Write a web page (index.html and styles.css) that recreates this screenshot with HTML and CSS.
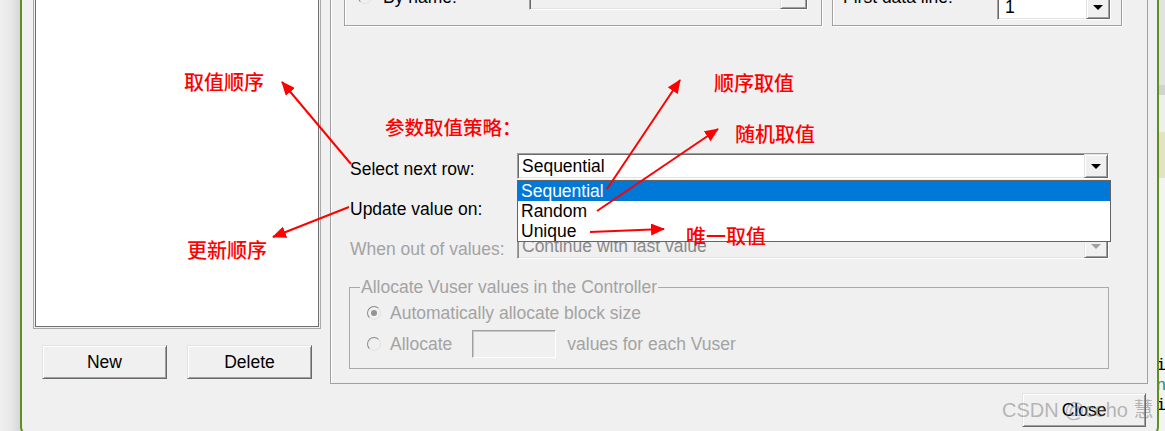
FILE: index.html
```html
<!DOCTYPE html>
<html lang="en">
<head>
<meta charset="utf-8">
<title>Parameter properties</title>
<link rel="stylesheet" href="styles.css">
</head>
<body>
<div class="screen">
  <div class="desk-left"></div>
  <div class="dialog">
    <div class="dialog-body">
      <div class="left-col">
        <div class="list-outer"><div class="list-inner"></div></div>
        <div class="btn-row">
          <button class="btn">New</button>
          <button class="btn">Delete</button>
        </div>
      </div>
      <div class="right-col">
        <div class="panel">
          <div class="top-row">
            <div class="group g-source">
              <div class="src-row">
                <span class="radio"></span>
                <span class="lbl lbl-name">By name:</span>
                <div class="combo c-name"><span class="combo-text"></span><span class="combo-btn wide"></span></div>
              </div>
            </div>
            <div class="group g-first">
              <span class="lbl lbl-first">First data line:</span>
              <div class="combo c-first"><span class="combo-text pad7">1</span><span class="combo-btn"><i class="arrow"></i></span></div>
            </div>
          </div>
          <div class="form">
            <div class="row">
              <span class="row-label">Select next row:</span>
              <div class="combo c-wide">
                <span class="combo-text">Sequential</span>
                <span class="combo-btn"><i class="arrow"></i></span>
                <ul class="popup">
                  <li class="sel">Sequential</li>
                  <li>Random</li>
                  <li>Unique</li>
                </ul>
              </div>
            </div>
            <div class="row">
              <span class="row-label">Update value on:</span>
              <div class="combo c-wide">
                <span class="combo-text"></span>
                <span class="combo-btn"><i class="arrow"></i></span>
              </div>
            </div>
            <div class="row">
              <span class="row-label dis">When out of values:</span>
              <div class="combo c-wide disabled">
                <span class="combo-text">Continue with last value</span>
                <span class="combo-btn"><i class="arrow"></i></span>
              </div>
            </div>
          </div>
          <fieldset class="alloc">
            <legend>Allocate Vuser values in the Controller</legend>
            <div class="a-row a-row1">
              <span class="radio checked"></span>
              <span class="a-text">Automatically allocate block size</span>
            </div>
            <div class="a-row a-row2">
              <span class="radio"></span>
              <span class="a-text">Allocate</span>
              <span class="a-input"></span>
              <span class="a-after">values for each Vuser</span>
            </div>
          </fieldset>
        </div>
        <div class="close-row"><button class="btn btn-close">Close</button></div>
      </div>
    </div>
  </div>
  <div class="desk-right"><span class="dr-i">i</span><span class="dr-n">n</span><span class="dr-i">i</span></div>
</div>

<div class="watermark">CSDN @ceho 慧</div>

<svg class="arrows" width="1165" height="431" viewBox="0 0 1165 431" xmlns="http://www.w3.org/2000/svg">
  <defs>
    <marker id="head" viewBox="0 0 14 12" refX="13" refY="6" markerWidth="14" markerHeight="12" markerUnits="userSpaceOnUse" orient="auto">
      <path d="M0,0 L14,6 L0,12 z" fill="#ff0000"/>
    </marker>
  </defs>
  <g stroke="#ff0000" stroke-width="2" fill="none" marker-end="url(#head)">
    <line x1="351" y1="164" x2="282" y2="82"/>
    <line x1="607" y1="189" x2="680" y2="80"/>
    <line x1="597" y1="211" x2="718" y2="129"/>
    <line x1="590" y1="232" x2="664" y2="229"/>
    <line x1="349" y1="207" x2="273" y2="237"/>
  </g>
</svg>

<span class="note n-order">取值顺序</span>
<span class="note n-strategy">参数取值策略：</span>
<span class="note n-seq">顺序取值</span>
<span class="note n-rand">随机取值</span>
<span class="note n-uniq">唯一取值</span>
<span class="note n-update">更新顺序</span>
</body>
</html>
```
FILE: styles.css
```css
html, body {
  margin: 0;
  padding: 0;
}
body {
  width: 1165px;
  height: 431px;
  overflow: hidden;
  position: relative;
  background: #f0f0f0;
  font-family: "Liberation Sans", Arial, sans-serif;
  font-size: 17.5px;
  color: #000;
}

.screen {
  display: flex;
  height: 431px;
  overflow: hidden;
}

.desk-left {
  width: 20px;
  flex: none;
  background: linear-gradient(to right, #efefef, #e8e8e8 55%, #d6d6d6);
}

.dialog {
  width: 1135px;
  height: 434px;
  flex: none;
  background: #f0f0f0;
  border: 2px solid #5f8f1e;
  border-top: none;
  border-radius: 0 0 9px 9px;
  overflow: hidden;
}

.dialog-body {
  display: flex;
  gap: 9px;
  padding-left: 11px;
  margin-top: -48px;
}

/* left column */
.left-col {
  width: 288px;
  flex: none;
}
.list-outer {
  height: 377px;
  box-sizing: border-box;
  border: 1px solid #a9a9a9;
  padding: 1px;
  background: #f0f0f0;
}
.list-inner {
  height: 100%;
  box-sizing: border-box;
  border: 1px solid #6f6f6f;
  background: #fff;
}
.btn-row {
  display: flex;
  gap: 20px;
  padding-left: 9px;
  margin-top: 16px;
}
.btn {
  width: 125px;
  height: 34px;
  box-sizing: border-box;
  padding: 0;
  font: inherit;
  color: #000;
  background: #f0f0f0;
  border: 1px solid;
  border-color: #e3e3e3 #696969 #696969 #e3e3e3;
  box-shadow: inset 1px 1px 0 #fff, inset -1px -1px 0 #a0a0a0;
}

/* right column */
.right-col {
  width: 818px;
  flex: none;
}
.panel {
  box-sizing: border-box;
  border: 1px solid #a0a0a0;
  box-shadow: inset 1px 1px 0 #fff;
  padding: 7px 0 14px 13px;
}

.top-row {
  display: flex;
  gap: 10px;
}
.group {
  height: 66px;
  box-sizing: border-box;
  border: 1px solid #a0a0a0;
  box-shadow: 1px 1px 0 #fff, inset 1px 1px 0 #fff;
  display: flex;
  align-items: flex-end;
}
.g-source {
  width: 478px;
  padding: 0 13px 15px 13px;
}
.g-first {
  width: 290px;
  padding: 0 10px 5px 10px;
}
.src-row {
  display: flex;
  align-items: center;
  width: 100%;
}
.lbl {
  line-height: 20px;
  white-space: nowrap;
}
.lbl-name {
  margin-left: 11px;
}
.lbl-first {
  margin-bottom: 13px;
}

/* combo boxes */
.combo {
  position: relative;
  box-sizing: border-box;
  height: 26px;
  border: 1px solid;
  border-color: #a0a0a0 #fff #fff #a0a0a0;
  box-shadow: inset 1px 1px 0 #696969, inset -1px -1px 0 #e3e3e3;
  background: #fff;
  display: flex;
  align-items: center;
}
.combo-text {
  flex: 1;
  padding-left: 4px;
  line-height: 20px;
  white-space: nowrap;
}
.combo-text.pad7 {
  padding-left: 7px;
}
.combo-btn {
  width: 24px;
  height: 24px;
  flex: none;
  box-sizing: border-box;
  border: 1px solid;
  border-color: #e3e3e3 #696969 #696969 #e3e3e3;
  box-shadow: inset 1px 1px 0 #fff, inset -1px -1px 0 #a0a0a0;
  background: #f0f0f0;
  display: flex;
  align-items: center;
  justify-content: center;
}
.combo-btn.wide {
  width: 27px;
}
.arrow {
  width: 0;
  height: 0;
  border-left: 5px solid transparent;
  border-right: 5px solid transparent;
  border-top: 5px solid #000;
}
.c-name {
  margin-left: auto;
  width: 279px;
  background: #f0f0f0;
}
.c-first {
  margin-left: auto;
  width: 114px;
}
.c-wide {
  width: 592px;
}
.combo.disabled {
  background: #f0f0f0;
  color: #8a8a8a;
  box-shadow: inset 1px 1px 0 #8a8a8a, inset -1px -1px 0 #e3e3e3;
}
.combo.disabled .arrow {
  border-top-color: #a0a0a0;
}

.popup {
  position: absolute;
  left: -1px;
  top: 26px;
  z-index: 5;
  width: 594px;
  box-sizing: border-box;
  margin: 0;
  padding: 0;
  list-style: none;
  background: #fff;
  border: 1px solid #646464;
}
.popup li {
  height: 20px;
  line-height: 20px;
  padding-left: 3px;
  color: #000;
}
.popup li.sel {
  background: #0078d7;
  color: #fff;
}

/* form rows */
.form {
  margin-top: 127px;
  padding-left: 6px;
  display: flex;
  flex-direction: column;
  gap: 14px;
}
.row {
  display: flex;
  align-items: center;
  height: 26px;
}
.row-label {
  width: 167px;
  flex: none;
  padding-top: 6px;
  line-height: 20px;
  white-space: nowrap;
}
.row-label.dis {
  color: #a3a3a3;
}

/* allocate fieldset */
.alloc {
  margin: 18px 0 0 5px;
  width: 760px;
  box-sizing: border-box;
  min-inline-size: 0;
  border: 1px solid #a9a9a9;
  padding: 5px 10px 10px 10px;
  color: #a3a3a3;
}
.alloc legend {
  padding: 0 1px;
  line-height: 20px;
}
.a-row {
  display: flex;
  align-items: center;
  white-space: nowrap;
}
.a-row1 {
  height: 22px;
}
.a-row2 {
  height: 28px;
  margin-top: 6px;
}
.radio {
  width: 14px;
  height: 14px;
  flex: none;
  box-sizing: border-box;
  border-radius: 50%;
  border: 1px solid;
  border-color: #8c8c8c #e3e3e3 #e3e3e3 #8c8c8c;
  background: #f0f0f0;
  display: flex;
  align-items: center;
  justify-content: center;
}
.a-row .radio {
  margin-left: 7px;
  margin-right: 9px;
}
.radio.checked::after {
  content: "";
  width: 6px;
  height: 6px;
  border-radius: 50%;
  background: #939393;
}
.a-text {
  line-height: 20px;
}
.a-input {
  width: 84px;
  height: 28px;
  box-sizing: border-box;
  margin-left: 20px;
  border: 1px solid;
  border-color: #a0a0a0 #fff #fff #a0a0a0;
  box-shadow: inset 1px 1px 0 #c8c8c8;
  background: #f0f0f0;
}
.a-after {
  margin-left: 11px;
  line-height: 20px;
}

.close-row {
  display: flex;
  justify-content: flex-end;
  padding-right: 2px;
  margin-top: 9px;
}
.btn-close {
  width: 124px;
}

/* desktop strip at the right */
.desk-right {
  width: 6px;
  flex: none;
  box-sizing: border-box;
  height: 431px;
  overflow: hidden;
  padding-top: 356px;
  background: linear-gradient(to bottom, #e2e2e2 0, #e2e2e2 85px, #d2d2d2 85px, #d2d2d2 95px, #eeeeee 95px, #eeeeee 132px, #e4e2c4 132px, #e4e2c4 178px, #f3f3f3 178px);
  font-family: "Liberation Mono", monospace;
  font-size: 17px;
  line-height: 20px;
}
.desk-right span {
  display: block;
  margin-left: -3px;
}
.dr-n {
  color: #1a8a8a;
}

/* overlays */
.watermark {
  position: absolute;
  z-index: 8;
  left: 1002px;
  top: 399px;
  font-family: "Liberation Sans", "Noto Sans CJK SC", sans-serif;
  font-size: 20px;
  line-height: 22px;
  color: rgba(120, 120, 120, 0.5);
  white-space: nowrap;
}
.arrows {
  position: absolute;
  z-index: 10;
  left: 0;
  top: 0;
  pointer-events: none;
}
.note {
  position: absolute;
  z-index: 11;
  color: #ff0000;
  font-family: "Noto Sans CJK SC", sans-serif;
  font-size: 20px;
  line-height: 20px;
  font-weight: 500;
  white-space: nowrap;
}
.n-order { left: 184px; top: 72px; }
.n-strategy { left: 385px; top: 117px; font-size: 19.5px; }
.n-seq { left: 714px; top: 73px; }
.n-rand { left: 735px; top: 124px; }
.n-uniq { left: 686px; top: 226px; }
.n-update { left: 187px; top: 240px; }
```
